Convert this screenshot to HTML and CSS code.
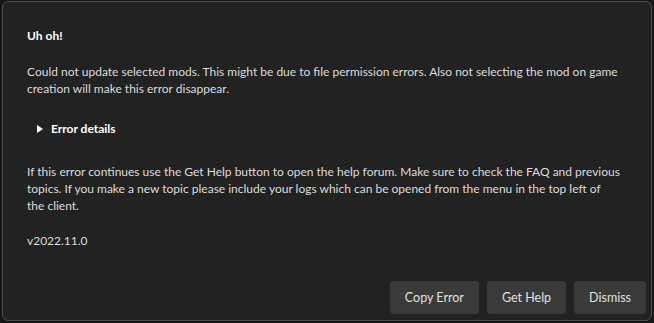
FILE: index.html
```html
<!DOCTYPE html>
<html lang="en">
<head>
    <meta charset="UTF-8">
    <title>Error</title>
    <link rel="stylesheet" href="styles.css">
</head>
<body>
<div class="dialog">
    <div class="dialog-body">
        <h1 class="title">Uh oh!</h1>
        <p class="message">Could not update selected mods. This might be due to file permission errors. Also not selecting the mod on game creation will make this error disappear.</p>
        <details class="details">
            <summary>Error details</summary>
        </details>
        <p class="message help">If this error continues use the Get Help button to open the help forum. Make sure to check the FAQ and previous topics. If you make a new topic please include your logs which can be opened from the menu in the top left of the&nbsp;client.</p>
        <p class="version">v2022.11.0</p>
    </div>
    <div class="actions">
        <button class="btn">Copy Error</button>
        <button class="btn">Get Help</button>
        <button class="btn">Dismiss</button>
    </div>
</div>
</body>
</html>
```

FILE: styles.css
```css
* {
    box-sizing: border-box;
    margin: 0;
    padding: 0;
}

html, body {
    height: 100%;
}

body {
    background: #161616;
    padding: 1px 2px 2px 2px;
    font-family: 'Lato', 'Noto Sans', sans-serif;
    font-size: 12px;
    line-height: 17px;
    color: #dcdcdc;
}

.dialog {
    display: flex;
    flex-direction: column;
    height: 100%;
    background: #222222;
    border: 1px solid #4b4b4b;
    border-radius: 6px;
}

.dialog-body {
    padding: 25px 20px 0 24px;
}

.title {
    font-size: 12px;
    font-weight: bold;
    color: #ffffff;
    line-height: 17px;
}

.message {
    margin-top: 19px;
}

.details {
    margin-top: 23px;
    padding-left: 10px;
}

.details summary {
    list-style: none;
    font-weight: bold;
    color: #ffffff;
    cursor: pointer;
}

.details summary::-webkit-details-marker {
    display: none;
}

.details summary::before {
    content: '';
    display: inline-block;
    width: 0;
    height: 0;
    border-top: 4px solid transparent;
    border-bottom: 4px solid transparent;
    border-left: 6px solid #ffffff;
    margin-right: 8px;
    vertical-align: 0;
}

.help {
    margin-top: 26px;
}

.version {
    margin-top: 18px;
}

.actions {
    margin-top: auto;
    display: flex;
    justify-content: flex-end;
    gap: 8px;
    padding: 0 5px 6px 0;
}

.btn {
    appearance: none;
    border: none;
    height: 33px;
    padding: 0 15px;
    border-radius: 4px;
    background: #3a3a3a;
    color: #e0e0e0;
    font-family: inherit;
    font-size: 12.5px;
    cursor: pointer;
}

.btn:hover {
    background: #444444;
}
```
